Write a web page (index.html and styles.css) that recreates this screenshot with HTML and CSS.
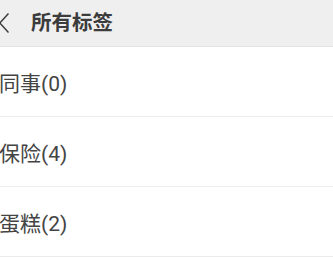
FILE: index.html
```html
<!DOCTYPE html>
<html lang="zh">
<head>
<meta charset="utf-8">
<link rel="stylesheet" href="styles.css">
</head>
<body>
<div class="page">
  <header class="bar">
    <svg class="back" width="10" height="20" viewBox="0 0 10 20"><path d="M9.5 0.5 L0.8 10 L9.5 19.5" fill="none" stroke="#3a3a3a" stroke-width="1.5"/></svg>
    <h1 class="title">所有标签</h1>
  </header>
  <ul class="list">
    <li class="item">同事(0)</li>
    <li class="item">保险(4)</li>
    <li class="item">蛋糕(2)</li>
  </ul>
</div>
</body>
</html>
```
FILE: styles.css
```css
html, body {
  margin: 0;
  padding: 0;
  background: #ffffff;
}
.page {
  font-family: "Roboto", "Noto Sans CJK SC", sans-serif;
  color: #3a3a3a;
}
.bar {
  height: 46px;
  background: #efefef;
  border-bottom: 1px solid #e2e2e2;
  display: flex;
  align-items: center;
  gap: 22px;
  padding-left: 0;
}
.back {
  display: block;
  flex: none;
  margin-left: -1px;
}
.title {
  margin: 0;
  font-size: 20.5px;
  font-weight: bold;
  color: #3c3c3c;
  line-height: 1;
}
.list {
  list-style: none;
  margin: 0;
  padding: 0;
}
.item {
  height: 69px;
  border-bottom: 1px solid #ececec;
  display: flex;
  align-items: center;
  font-size: 21px;
  color: #444;
  margin-left: -1px;
}
```
